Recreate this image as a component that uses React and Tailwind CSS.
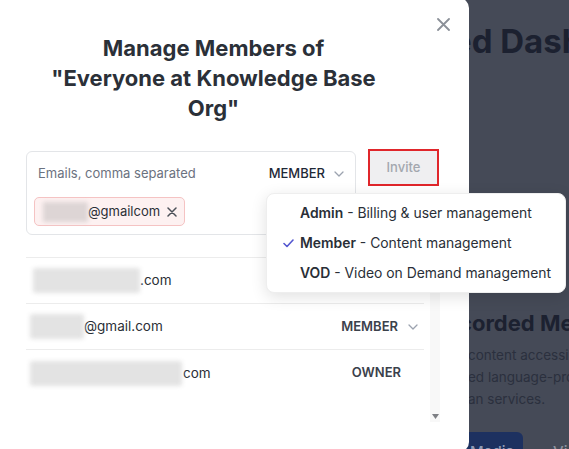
import React from "react";

function Chevron() {
  return (
    <svg width="10" height="6" viewBox="0 0 10 6" fill="none">
      <path d="M1 1l4 4 4-4" stroke="#9ca3af" strokeWidth="1.3" strokeLinecap="round" strokeLinejoin="round" />
    </svg>
  );
}

function Blob({ w, className = "" }) {
  return <span className={`inline-block h-[25px] bg-[#e3e3e3] blur-[2px] rounded-[2px] ${className}`} style={{ width: w }} />;
}

export default function App() {
  return (
    <div className="relative w-[569px] h-[449px] overflow-hidden bg-[#454a57] font-['Inter','Noto_Sans',sans-serif]">
      {/* page behind the overlay */}
      <div className="flex flex-col pl-[452px] pt-[23px] whitespace-nowrap text-[#1c2130]">
        <div className="text-[33px] font-bold leading-[36px]">ed Dashboard</div>
        <div className="mt-[250px] ml-[7px] text-[22px] font-bold leading-[28px]">corded Media</div>
        <div className="mt-[7px] ml-[16px] text-[13.5px] leading-[22px] text-[#2b303e]">
          <div>content accessibility</div>
          <div>ed language-processing</div>
          <div>an services.</div>
        </div>
        <div className="mt-[22px] ml-[-13px] flex items-start gap-[10px]">
          <div className="shrink-0 w-[84px] h-[40px] rounded-[6px] bg-[#1d3160] flex items-center justify-end pr-[9px] text-[15px] font-medium text-[#8f9bb6]">Media</div>
          <div className="shrink-0 h-[40px] px-[20px] flex items-center text-[15px] font-medium text-[#8d939f]">View</div>
        </div>
      </div>

      {/* modal */}
      <div className="absolute left-0 top-[-2px] w-[469px] h-[454px] bg-white rounded-r-[10px]">
        <button className="absolute right-[19px] top-[19px] w-[14px] h-[14px] flex items-center justify-center">
          <svg width="13" height="13" viewBox="0 0 13 13" fill="none">
            <path d="M1 1l11 11M12 1L1 12" stroke="#8b9098" strokeWidth="1.8" strokeLinecap="round" />
          </svg>
        </button>
        <h2 className="pt-[35px] pl-[26px] pr-[68px] text-center text-[22px] leading-[30px] font-bold text-[#2b3038]">
          Manage Members of
          <br />
          "Everyone at Knowledge Base
          <br />
          Org"
        </h2>

        <div className="mt-[26px] flex items-start pl-[26px]">
          <div className="mt-[2px] w-[330px] h-[84px] border border-[#e3e5e8] rounded-[6px] flex flex-col">
            <div className="h-[43px] flex items-center justify-between pl-[11px] pr-[11px]">
              <span className="text-[13px] text-[#6b7280]">Emails, comma separated</span>
              <span className="flex items-center gap-[9px]">
                <span className="text-[13px] font-medium text-[#1f2937]">MEMBER</span>
                <Chevron />
              </span>
            </div>
            <div className="mt-[2px] pl-[7px]">
              <span className="inline-flex items-center h-[29px] border border-[#f5c3c3] bg-[#fdf1f1] rounded-[5px] pl-[8px] pr-[7px]">
                <span className="inline-block w-[45px] h-[20px] bg-[#ddd5d5] blur-[2px]" />
                <span className="text-[13px] text-[#2b2f36]">@gmailcom</span>
                <svg className="ml-[7px]" width="10" height="10" viewBox="0 0 10 10" fill="none">
                  <path d="M1 1l8 8M9 1L1 9" stroke="#4b5058" strokeWidth="1.5" strokeLinecap="round" />
                </svg>
              </span>
            </div>
          </div>
          <button className="ml-[12px] w-[71px] h-[37px] border-2 border-[#e0262b] bg-[#efeff1] text-[#a3a7ae] text-[13px] font-medium">
            Invite
          </button>
        </div>

        <div className="mt-[22px] ml-[26px] flex h-[165px]">
          <div className="w-[398px] border-t border-[#ececec]">
            <div className="h-[46px] flex items-center justify-between border-b border-[#ececec] pl-[7px]">
              <span className="flex items-center">
                <Blob w={107} />
                <span className="text-[13.5px] text-[#2b2f36]">.com</span>
              </span>
            </div>
            <div className="h-[46px] flex items-center justify-between border-b border-[#ececec] pl-[4px] pr-[6px]">
              <span className="flex items-center">
                <Blob w={54} />
                <span className="text-[13.5px] text-[#2b2f36]">@gmail.com</span>
              </span>
              <span className="flex items-center gap-[10px]">
                <span className="text-[13px] font-semibold text-[#3b414b]">MEMBER</span>
                <Chevron />
              </span>
            </div>
            <div className="h-[46px] flex items-center justify-between pl-[4px] pr-[23px]">
              <span className="flex items-center">
                <Blob w={152} />
                <span className="ml-[1px] text-[13.5px] text-[#2b2f36]">com</span>
              </span>
              <span className="text-[13px] font-semibold text-[#3b414b]">OWNER</span>
            </div>
          </div>
          <div className="ml-[6px] w-[10px] bg-[#f8f8f8] flex flex-col justify-end items-center pb-[3px]">
            <svg width="7" height="5" viewBox="0 0 7 5">
              <path d="M0 0h7L3.5 5z" fill="#7d7f84" />
            </svg>
          </div>
        </div>
      </div>

      {/* dropdown menu */}
      <div className="absolute left-[266px] top-[193px] w-[300px] py-[4px] rounded-[8px] bg-white border border-[#eeeeee] shadow-[0_4px_16px_rgba(0,0,0,0.12)] text-[13.9px] text-[#2a2f37] whitespace-nowrap">
        <div className="h-[30px] flex items-center">
          <span className="w-[33px]" />
          <span><span className="font-semibold">Admin</span> - Billing &amp; user management</span>
        </div>
        <div className="h-[30px] flex items-center">
          <span className="w-[33px] flex pl-[16px]">
            <svg width="11" height="9" viewBox="0 0 11 9" fill="none">
              <path d="M1 4.5l3 3L10 1" stroke="#5457d0" strokeWidth="1.6" strokeLinecap="round" strokeLinejoin="round" />
            </svg>
          </span>
          <span><span className="font-semibold">Member</span> - Content management</span>
        </div>
        <div className="h-[30px] flex items-center">
          <span className="w-[33px]" />
          <span><span className="font-semibold">VOD</span> - Video on Demand management</span>
        </div>
      </div>
    </div>
  );
}
